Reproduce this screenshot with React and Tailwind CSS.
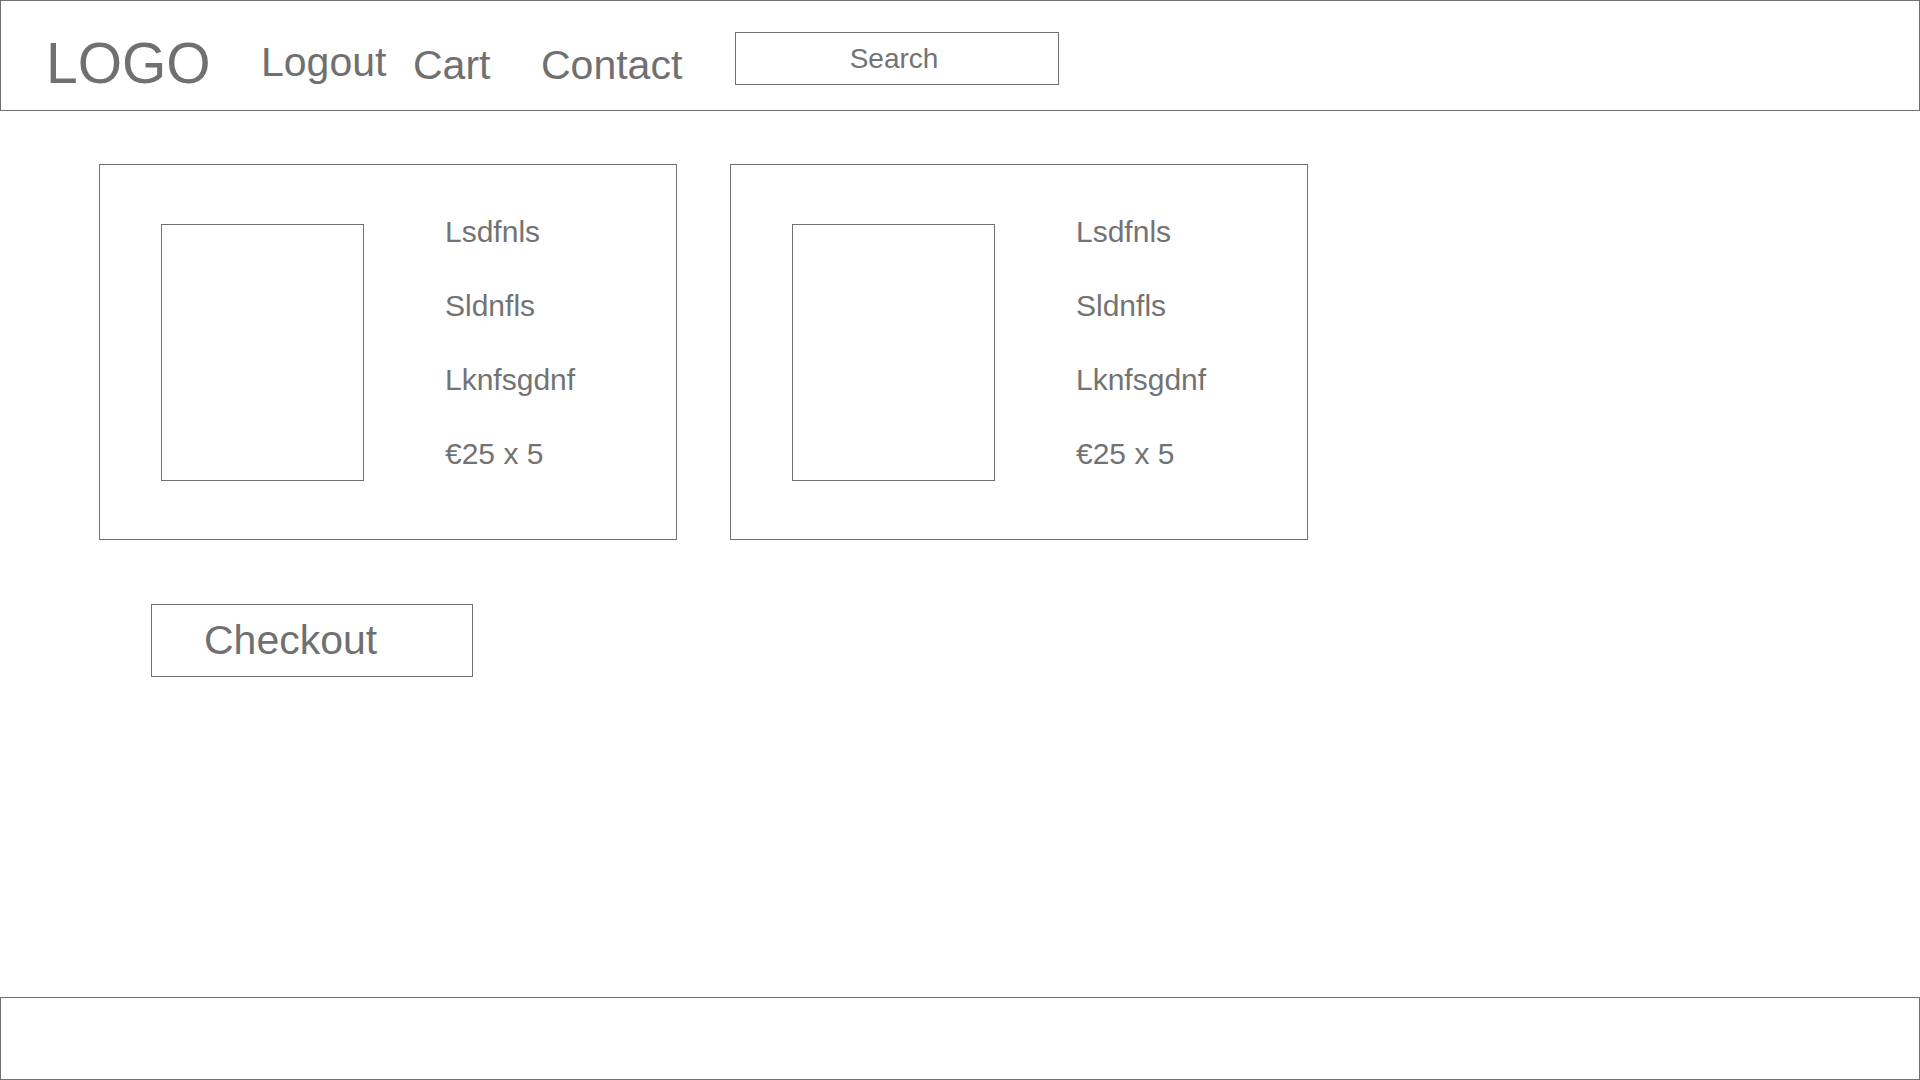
import React from "react";

const items = [
  { id: 1, lines: ["Lsdfnls", "Sldnfls", "Lknfsgdnf", "€25 x 5"] },
  { id: 2, lines: ["Lsdfnls", "Sldnfls", "Lknfsgdnf", "€25 x 5"] },
];

const CartCard = ({ lines }) => (
  <div className="flex w-[578px] h-[376px] border border-[#707070] pl-[61px] pt-[59px]">
    <div className="w-[203px] h-[257px] border border-[#707070] shrink-0" />
    <div className="ml-[81px] mt-[-7px] flex flex-col gap-[44px]">
      {lines.map((line) => (
        <p key={line} className="text-[30px] leading-none text-[#737373]">
          {line}
        </p>
      ))}
    </div>
  </div>
);

const App = () => {
  return (
    <div
      className="min-h-screen flex flex-col bg-white"
      style={{ fontFamily: '"Liberation Sans", Arial, sans-serif' }}
    >
      <header className="h-[111px] border border-[#707070] flex items-start">
        <div className="ml-[45px] w-[215px] mt-[34px] text-[57px] leading-none text-[#707070]">
          LOGO
        </div>
        <a className="w-[152px] mt-[41px] text-[41px] leading-none text-[#707070]">Logout</a>
        <a className="w-[128px] mt-[44px] text-[41px] leading-none text-[#707070]">Cart</a>
        <a className="w-[194px] mt-[44px] text-[41px] leading-none text-[#707070]">Contact</a>
        <div className="mt-[31px] w-[324px] h-[53px] border border-[#707070] flex items-center justify-center pr-[6px] text-[28px] leading-none text-[#737373]">
          Search
        </div>
      </header>

      <main className="pl-[99px] pt-[53px]">
        <div className="flex gap-[53px]">
          {items.map((item) => (
            <CartCard key={item.id} lines={item.lines} />
          ))}
        </div>
        <button className="mt-[64px] ml-[52px] w-[322px] h-[73px] border border-[#707070] flex items-center pl-[52px] text-[41px] leading-none text-[#707070]">
          Checkout
        </button>
      </main>

      <footer className="mt-auto h-[83px] border border-[#707070]" />
    </div>
  );
};

export default App;
